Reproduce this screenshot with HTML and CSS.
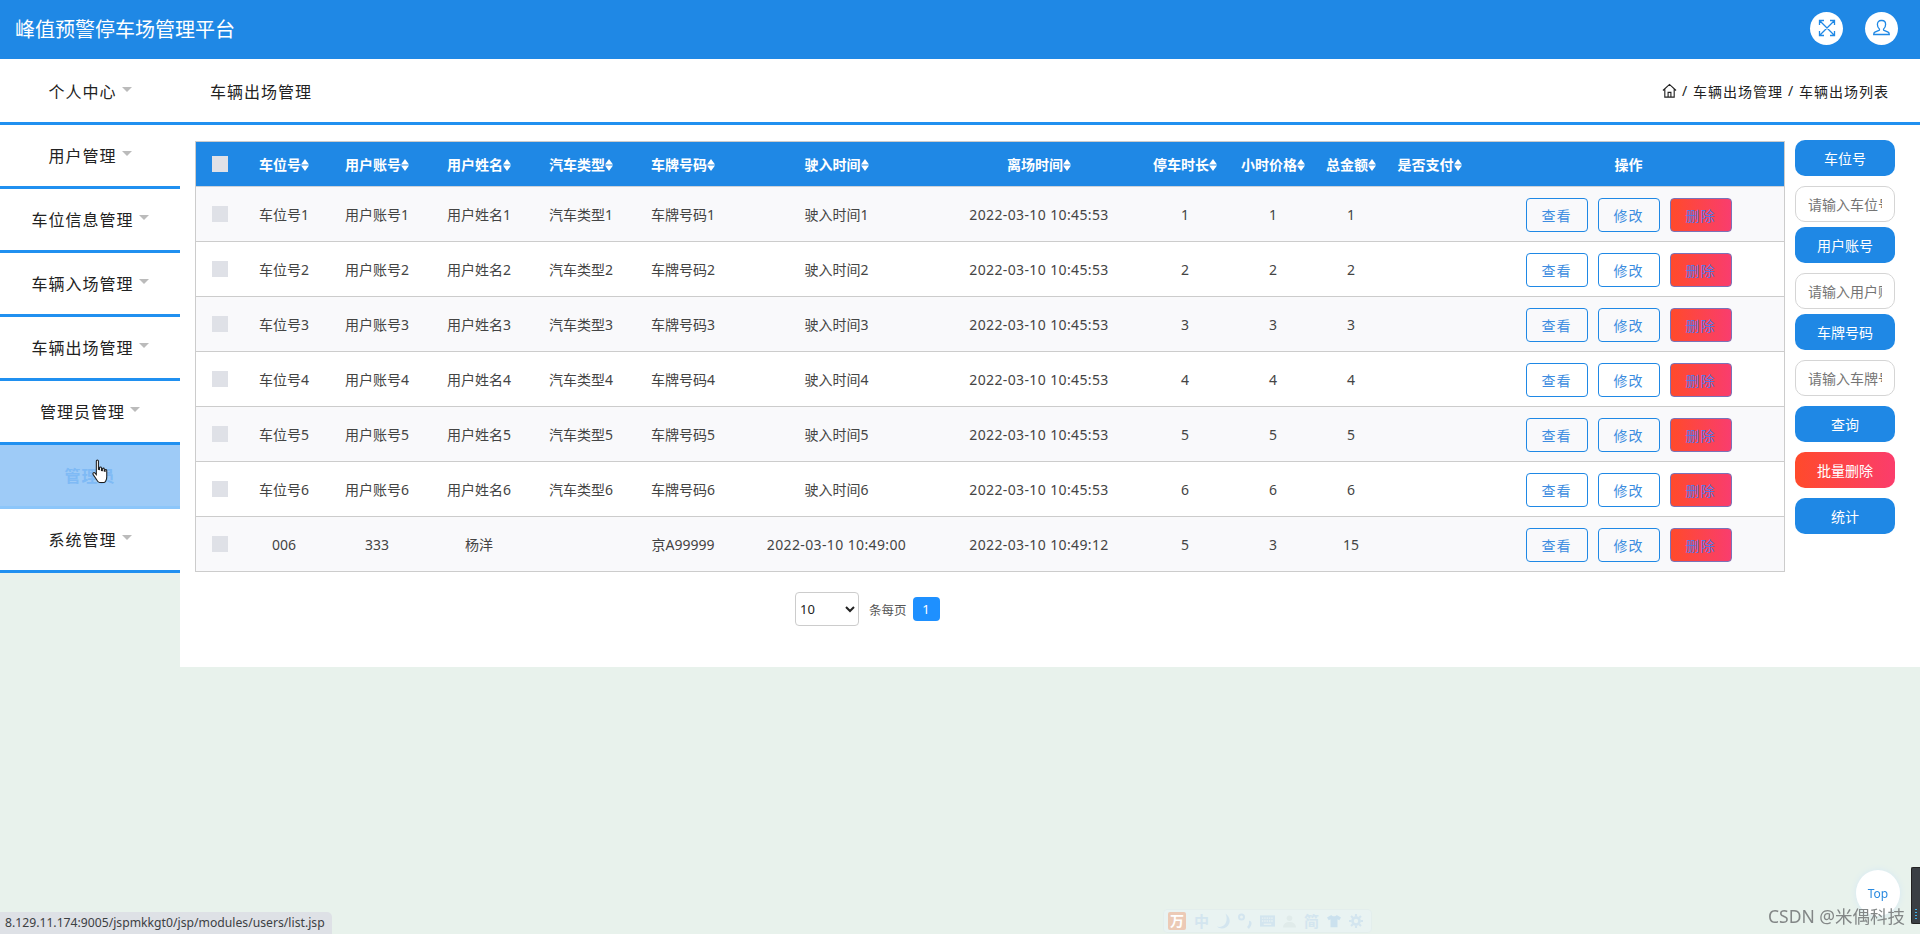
FILE: index.html
```html
<!DOCTYPE html>
<html lang="zh-CN">
<head>
<meta charset="utf-8">
<title>峰值预警停车场管理平台</title>
<link rel="stylesheet" href="styles.css">
</head>
<body>
<svg class="defs" width="0" height="0" aria-hidden="true">
  <symbol id="sort" viewBox="0 0 8 12"><path d="M4 0 8 5.500H0ZM0 6.500H8L4 12Z" fill="currentColor"/></symbol>
</svg>
<header class="topbar">
  <h1 class="brand">峰值预警停车场管理平台</h1>
  <div class="top-actions">
    <span class="round-icon"><svg viewBox="0 0 18 18" width="18" height="18" fill="none" stroke="#1f88e5" stroke-width="1.300"><path d="M1.500 6V1.500H6M12 1.500h4.500V6M16.500 12v4.500H12M6 16.500H1.500V12M2 2l14 14M16 2 2 16"/></svg></span>
    <span class="round-icon"><svg viewBox="0 0 18 18" width="18" height="18" fill="none" stroke="#1f88e5" stroke-width="1.300"><path d="M9 1.500c2.200 0 3.600 1.700 3.600 3.900 0 2-.9 3.500-1.900 4.500-.4.500-.2 1.200.4 1.500l4 1.800c.8.400 1.200 1 1.200 2.300H.7c0-1.300.4-1.900 1.200-2.300l4-1.800c.6-.3.8-1 .4-1.500-1-1-1.900-2.500-1.900-4.500 0-2.200 1.400-3.900 3.600-3.900Z"/></svg></span>
  </div>
</header>
<div class="layout">
  <nav class="sidebar">
    <a class="nav-item">个人中心<i class="caret"></i></a>
    <a class="nav-item">用户管理<i class="caret"></i></a>
    <a class="nav-item">车位信息管理<i class="caret"></i></a>
    <a class="nav-item">车辆入场管理<i class="caret"></i></a>
    <a class="nav-item">车辆出场管理<i class="caret"></i></a>
    <a class="nav-item">管理员管理<i class="caret"></i></a>
    <a class="nav-item nav-hover">管理员
      <svg class="hand" viewBox="0 0 16 24" width="17" height="25"><path d="M4 2c0-1.300 2-1.300 2 0v8l1 .2V8.500c0-1.100 1.800-1.100 1.900 0V11l.9.200V9.500c0-1 1.800-1 1.800.1v2l.8.200v-1c0-1 1.600-1 1.600.2v6c0 3-1.500 5.500-2.500 5.500H7c-1.500 0-2.200-1.500-3-3L1 15c-.8-1.400.6-2.600 1.700-1.500L4 15Z" fill="#fff" stroke="#1c1c1c" stroke-width="1"/></svg>
    </a>
    <a class="nav-item">系统管理<i class="caret"></i></a>
  </nav>
  <main class="content">
    <div class="crumbbar">
      <span class="page-title">车辆出场管理</span>
      <div class="crumbs">
        <svg viewBox="0 0 16 16" width="15" height="15" fill="none" stroke="#222" stroke-width="1.200"><path d="M1 8 8 1.500 15 8M3 6.500V15h10V6.500M6.500 15v-5h3v5"/></svg>
        <span class="sep">/</span><span>车辆出场管理</span><span class="sep">/</span><span>车辆出场列表</span>
      </div>
    </div>
    <div class="workarea">
      <div class="table-col">
        <table class="grid">
          <colgroup>
            <col class="c-check"><col class="c-78"><col class="c-108"><col class="c-96"><col class="c-108"><col class="c-96"><col class="c-211"><col class="c-194"><col class="c-98"><col class="c-78"><col class="c-78"><col class="c-79"><col class="c-ops">
          </colgroup>
          <thead>
            <tr>
              <th><input class="check" type="checkbox"></th>
              <th>车位号<svg class="sort"><use href="#sort"/></svg></th>
              <th>用户账号<svg class="sort"><use href="#sort"/></svg></th>
              <th>用户姓名<svg class="sort"><use href="#sort"/></svg></th>
              <th>汽车类型<svg class="sort"><use href="#sort"/></svg></th>
              <th>车牌号码<svg class="sort"><use href="#sort"/></svg></th>
              <th>驶入时间<svg class="sort"><use href="#sort"/></svg></th>
              <th>离场时间<svg class="sort"><use href="#sort"/></svg></th>
              <th>停车时长<svg class="sort"><use href="#sort"/></svg></th>
              <th>小时价格<svg class="sort"><use href="#sort"/></svg></th>
              <th>总金额<svg class="sort"><use href="#sort"/></svg></th>
              <th>是否支付<svg class="sort"><use href="#sort"/></svg></th>
              <th>操作</th>
            </tr>
          </thead>
          <tbody>
            <tr>
              <td><input class="check" type="checkbox"></td><td>车位号1</td><td>用户账号1</td><td>用户姓名1</td><td>汽车类型1</td><td>车牌号码1</td><td>驶入时间1</td><td class="time">2022-03-10 10:45:53</td><td>1</td><td>1</td><td>1</td><td></td>
              <td><div class="ops"><button class="op">查看</button><button class="op">修改</button><button class="op op-del">删除</button></div></td>
            </tr>
            <tr>
              <td><input class="check" type="checkbox"></td><td>车位号2</td><td>用户账号2</td><td>用户姓名2</td><td>汽车类型2</td><td>车牌号码2</td><td>驶入时间2</td><td class="time">2022-03-10 10:45:53</td><td>2</td><td>2</td><td>2</td><td></td>
              <td><div class="ops"><button class="op">查看</button><button class="op">修改</button><button class="op op-del">删除</button></div></td>
            </tr>
            <tr>
              <td><input class="check" type="checkbox"></td><td>车位号3</td><td>用户账号3</td><td>用户姓名3</td><td>汽车类型3</td><td>车牌号码3</td><td>驶入时间3</td><td class="time">2022-03-10 10:45:53</td><td>3</td><td>3</td><td>3</td><td></td>
              <td><div class="ops"><button class="op">查看</button><button class="op">修改</button><button class="op op-del">删除</button></div></td>
            </tr>
            <tr>
              <td><input class="check" type="checkbox"></td><td>车位号4</td><td>用户账号4</td><td>用户姓名4</td><td>汽车类型4</td><td>车牌号码4</td><td>驶入时间4</td><td class="time">2022-03-10 10:45:53</td><td>4</td><td>4</td><td>4</td><td></td>
              <td><div class="ops"><button class="op">查看</button><button class="op">修改</button><button class="op op-del">删除</button></div></td>
            </tr>
            <tr>
              <td><input class="check" type="checkbox"></td><td>车位号5</td><td>用户账号5</td><td>用户姓名5</td><td>汽车类型5</td><td>车牌号码5</td><td>驶入时间5</td><td class="time">2022-03-10 10:45:53</td><td>5</td><td>5</td><td>5</td><td></td>
              <td><div class="ops"><button class="op">查看</button><button class="op">修改</button><button class="op op-del">删除</button></div></td>
            </tr>
            <tr>
              <td><input class="check" type="checkbox"></td><td>车位号6</td><td>用户账号6</td><td>用户姓名6</td><td>汽车类型6</td><td>车牌号码6</td><td>驶入时间6</td><td class="time">2022-03-10 10:45:53</td><td>6</td><td>6</td><td>6</td><td></td>
              <td><div class="ops"><button class="op">查看</button><button class="op">修改</button><button class="op op-del">删除</button></div></td>
            </tr>
            <tr>
              <td><input class="check" type="checkbox"></td><td>006</td><td>333</td><td>杨洋</td><td></td><td>京A99999</td><td class="time">2022-03-10 10:49:00</td><td class="time">2022-03-10 10:49:12</td><td>5</td><td>3</td><td>15</td><td></td>
              <td><div class="ops"><button class="op">查看</button><button class="op">修改</button><button class="op op-del">删除</button></div></td>
            </tr>
          </tbody>
        </table>
        <div class="pager">
          <select class="page-size"><option>10</option></select>
          <span class="page-label">条每页</span>
          <span class="page-num">1</span>
        </div>
      </div>
      <aside class="filters">
        <div class="field"><button class="pill">车位号</button><input class="pill-input" placeholder="请输入车位号"></div>
        <div class="field"><button class="pill">用户账号</button><input class="pill-input" placeholder="请输入用户账号"></div>
        <div class="field"><button class="pill">车牌号码</button><input class="pill-input" placeholder="请输入车牌号码"></div>
        <div class="actions">
          <button class="pill">查询</button>
          <button class="pill pill-danger">批量删除</button>
          <button class="pill">统计</button>
        </div>
      </aside>
    </div>
  </main>
</div>
<div class="status-url">8.129.11.174:9005/jspmkkgt0/jsp/modules/users/list.jsp</div>
<div class="ime">
  <span class="ime-logo">万</span>
  <span class="ime-ch">中</span>
  <svg viewBox="0 0 14 16" width="13" height="16"><path d="M9 0C11 3 11 9 8 12 6 14 3 15 0 14 4 18 11 16 13 11 15 6 12 2 9 0Z" fill="#d3e5ef"/></svg>
  <svg viewBox="0 0 14 16" width="14" height="16" fill="none" stroke="#d3e5ef"><circle cx="3.500" cy="4" r="2.500" stroke-width="2"/><path d="M11 9c1.800 0 1.800 3-1 6" stroke-width="2.600"/></svg>
  <svg viewBox="0 0 16 14" width="15" height="14"><path d="M0 1h16v12H0Z" fill="#d3e5ef"/><path d="M2 4h12M2 7h12" stroke="#e8f2f3" stroke-width="1.400" stroke-dasharray="1.500 1"/><path d="M4 10.500h8" stroke="#e8f2f3" stroke-width="1.400"/></svg>
  <svg viewBox="0 0 14 14" width="13" height="14" fill="#e0ebea"><circle cx="7" cy="4" r="3"/><path d="M0 14c0-4 3-6 7-6s7 2 7 6Z"/></svg>
  <span class="ime-ch">简</span>
  <svg viewBox="0 0 16 14" width="14" height="14"><path d="M5 0 0 3l2 3 2-1v9h8V5l2 1 2-3-5-3c-.5 2-5.500 2-6 0Z" fill="#cbe1ee"/></svg>
  <svg viewBox="0 0 16 16" width="14" height="16" fill="none" stroke="#d3e5ef"><circle cx="8" cy="8" r="4" stroke-width="3"/><path d="M8 0v3M8 13v3M0 8h3M13 8h3M2.300 2.300l2 2M11.700 11.700l2 2M13.700 2.300l-2 2M4.300 11.700l-2 2" stroke-width="2.400"/></svg>
</div>
<button class="to-top">Top</button>
<div class="side-widget"><i class="meter"></i></div>
<div class="watermark">CSDN @米偶科技</div>
</body>
</html>
```
FILE: styles.css
```css
* { box-sizing: border-box; }
html, body { height: 100%; }
body {
  margin: 0;
  height: 934px;
  overflow: hidden;
  background: #e8f2ec;
  color: #333;
  font-family: "Noto Sans", "Noto Sans CJK SC", sans-serif;
  font-size: 14px;
}
.defs { position: absolute; }
button, input, select { font-family: inherit; }

.topbar {
  height: 59px;
  background: #1f88e5;
  display: flex;
  align-items: center;
  justify-content: space-between;
  padding: 0 22px 0 15px;
}
.brand { margin: 0; font-size: 20px; font-weight: 400; color: #fff; line-height: 1; }
.top-actions { display: flex; gap: 22px; margin-top: -3px; }
.round-icon {
  width: 33px; height: 33px; border-radius: 50%;
  background: #fff;
  display: flex; align-items: center; justify-content: center;
}

.layout { display: flex; align-items: flex-start; }
.sidebar { width: 180px; flex: none; background: #fff; padding-top: 2px; }
.nav-item {
  height: 64px;
  display: flex; align-items: center; justify-content: center;
  padding-bottom: 1px;
  border-bottom: 3px solid #2090f0;
  color: #222;
  font-size: 16px;
  letter-spacing: 1px;
  position: relative;
}
.caret {
  width: 0; height: 0;
  margin: 0 0 3px 5px;
  border-left: 5px solid transparent;
  border-right: 5px solid transparent;
  border-top: 5px solid #bbb;
}
.nav-hover {
  background: #9ecbf7;
  border-bottom-color: #8cc6fa;
  color: #7fbaf5;
  font-weight: 700;
}
.hand { position: absolute; left: 92px; top: 14px; }

.content { flex: 1; height: 608px; background: #fff; }
.crumbbar {
  height: 66px;
  border-bottom: 3px solid #2090f0;
  display: flex; align-items: center; justify-content: space-between;
  padding: 0 31px 0 30px;
}
.page-title { font-size: 16px; letter-spacing: 1px; color: #222; }
.crumbs { display: flex; align-items: center; font-size: 14px; letter-spacing: 1px; color: #222; }
.sep { width: 16px; text-align: center; }

.workarea { display: flex; align-items: flex-start; padding: 15px 0 0 15px; }
.table-col { width: 1590px; flex: none; padding-top: 1px; }
.grid {
  width: 1590px;
  table-layout: fixed;
  border-collapse: separate;
  border-spacing: 0;
  border: 1px solid #ccc;
  border-bottom: 0;
}
.c-check { width: 49px; } .c-78 { width: 78px; } .c-108 { width: 108px; }
.c-96 { width: 96px; } .c-211 { width: 211px; } .c-194 { width: 194px; }
.c-98 { width: 98px; } .c-79 { width: 79px; } .c-ops { width: 315px; }
.grid th {
  height: 45px; padding: 0;
  background: #1f88e5; color: #fff;
  font-weight: 700; font-size: 14px;
  border-bottom: 1px solid #ccd2da;
  white-space: nowrap;
}
.grid td {
  height: 55px; padding: 0;
  text-align: center;
  color: #444;
  border-bottom: 1px solid #ccc;
  white-space: nowrap;
}
.grid th:last-child, .grid td:last-child { padding-left: 4px; }
.grid td.time { letter-spacing: 0.370px; }
.grid tbody tr:nth-child(odd) td { background: #f9f9fb; }
.sort { width: 8px; height: 12px; vertical-align: -1px; color: #fff; }
.check {
  appearance: none; -webkit-appearance: none;
  display: block; width: 16px; height: 16px;
  margin: 0 auto 0 16px;
  background: #dfe1e7;
}
.ops { display: flex; justify-content: center; gap: 10px; padding-top: 2px; }
.op {
  width: 62px; height: 34px; padding: 0;
  background: transparent;
  border: 1px solid #1f88e5;
  border-radius: 4px;
  color: #3d8de0;
  font-size: 14px;
  letter-spacing: 1px;
}
.op-del {
  background: linear-gradient(90deg, #ff4a2b, #f93d6e);
  border-color: #7b72b8;
  color: #5277e8;
}

.pager { display: flex; align-items: center; padding: 20px 0 0 600px; }
.page-size {
  width: 64px; height: 34px;
  background: #fff;
  border: 1px solid #ccc; border-radius: 4px;
  font-size: 13px; color: #222;
}
.page-label { margin: 0 6px 0 10px; font-size: 12.500px; color: #555; }
.page-num {
  width: 27px; height: 24px; border-radius: 4px;
  background: #1e90ff; color: #fff; font-size: 13px;
  display: flex; align-items: center; justify-content: center;
}

.filters { width: 100px; flex: none; margin-left: 10px; display: flex; flex-direction: column; gap: 5px; }
.field, .actions { display: flex; flex-direction: column; gap: 10px; }
.actions { margin-top: 5px; }
.pill {
  width: 100px; height: 36px; padding: 0;
  background: #1f88e5; color: #fff;
  border: 0; border-radius: 10px;
  font-size: 14px;
}
.pill-danger { background: linear-gradient(90deg, #ff4a2b, #fb3d6c); }
.pill-input {
  width: 100px; height: 36px;
  padding: 0 12px;
  background: #fff;
  border: 1px solid #d5d5d5;
  border-radius: 10px;
  font-size: 14px;
}
.pill-input::placeholder { color: #757575; }

.status-url {
  position: fixed; left: 0; bottom: 0;
  width: 332px; height: 22px;
  padding-left: 5px;
  background: #dee1e6;
  border-top-right-radius: 5px;
  color: #3c4043;
  font-size: 12.200px; line-height: 22px;
  white-space: nowrap;
}
.ime {
  position: fixed; left: 1163px; top: 909px;
  width: 209px; height: 24px;
  display: flex; align-items: center; gap: 8px;
  padding: 0 0 0 4px;
  background: #e9f3f2;
  border: 1px solid #e3eeec;
  border-radius: 4px;
}
.ime svg { display: block; flex: none; }
.ime-logo {
  width: 18px; height: 18px; border-radius: 2px;
  background: #eccab6; color: #fff;
  font-size: 14px; line-height: 18px; text-align: center; font-weight: 700;
}
.ime-ch { color: #d3e5ef; font-size: 15px; font-weight: 700; line-height: 18px; }
.to-top {
  position: fixed; left: 1856px; top: 870px;
  width: 44px; height: 46px; padding: 0;
  border: 0; border-radius: 50%;
  background: #fff;
  box-shadow: 0 0 6px #d5e8f5;
  color: #2a8ae0;
  font-size: 12px;
}
.side-widget {
  position: fixed; left: 1911px; top: 867px;
  width: 9px; height: 57px;
  background: #3a3f44;
  border: 1px solid #222;
  border-right: 0;
  border-radius: 2px 0 0 2px;
  display: flex; align-items: flex-end; padding: 0 0 2px 3px;
}
.meter { width: 2px; height: 12px; background: repeating-linear-gradient(#3fb0e8 0 1px, transparent 1px 3px); }
.watermark {
  position: fixed; left: 1768px; top: 904px;
  color: #838787;
  font-size: 17.500px; line-height: 24px;
  white-space: nowrap;
}
```
